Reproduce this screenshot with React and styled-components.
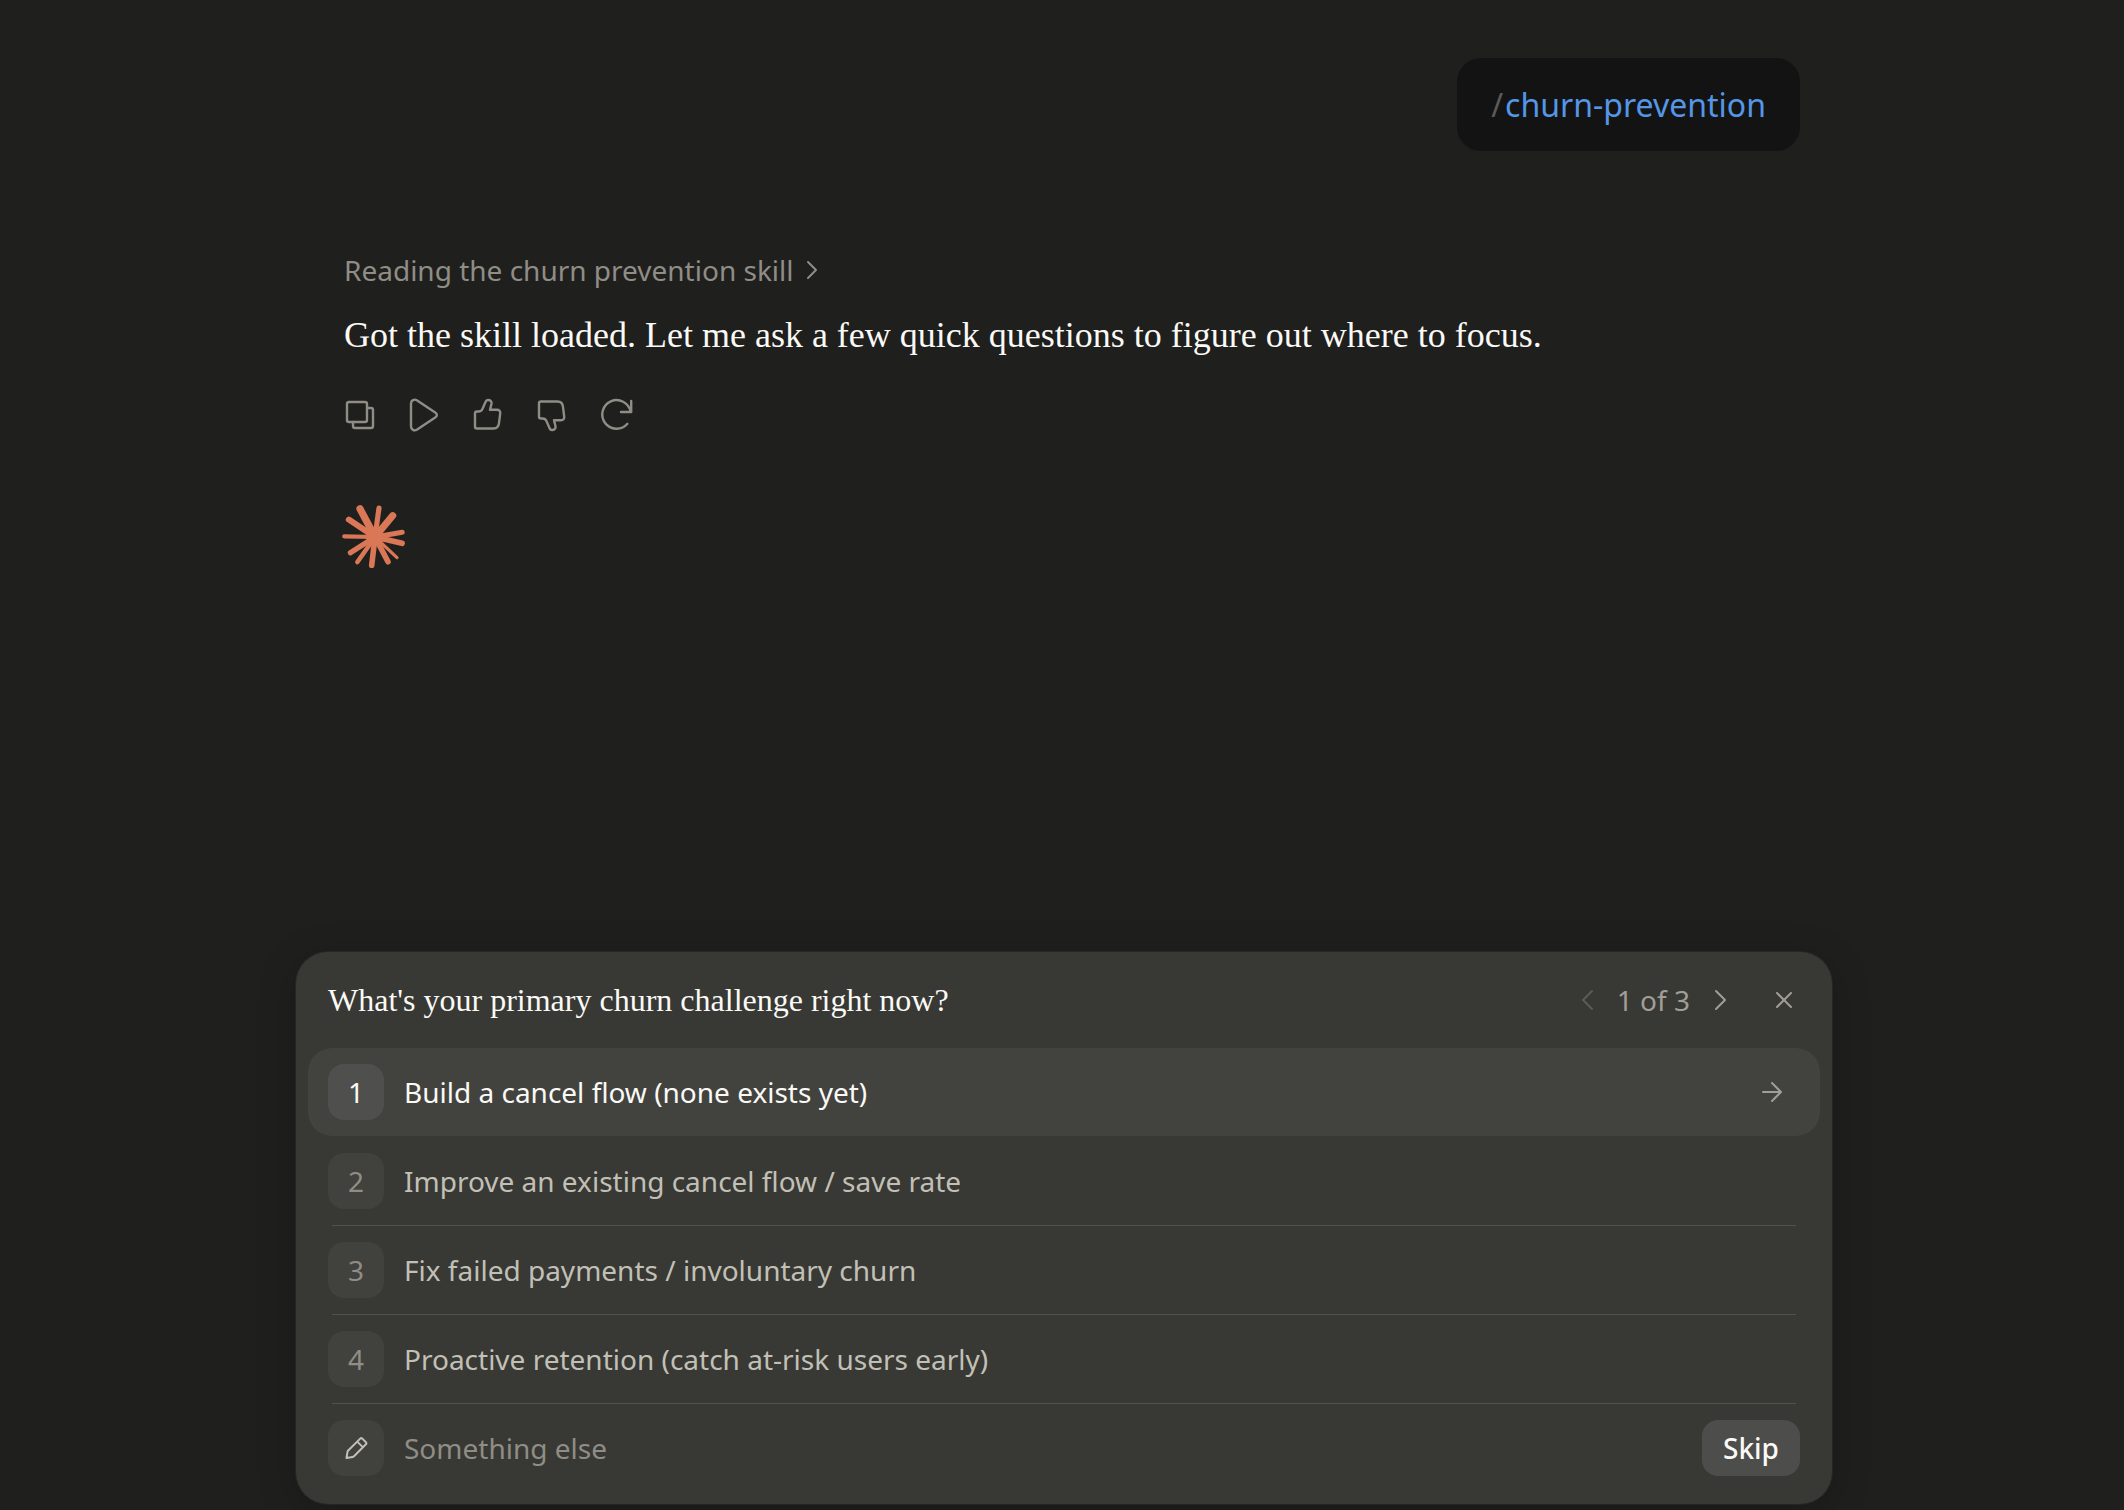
import React, { useState } from 'react';
import styled, { createGlobalStyle } from 'styled-components';

const GlobalStyle = createGlobalStyle`
  :root {
    --background: #1f1f1e;
    --bubble: #131313;
    --panel: #383834;
    --panel-hover: #42423e;
    --key: #41413d;
    --key-active: #4f4f4d;
    --line: #52524d;
    --foreground: #faf9f5;
    --secondary: #c2c0b6;
    --muted: #8f8d85;
    --accent: #5596e6;
    --brand: #d97757;
    --sans: "Noto Sans", "Open Sans", sans-serif;
    --serif: "Liberation Serif", "Times New Roman", serif;
  }

  * {
    box-sizing: border-box;
  }

  body {
    margin: 0;
    background: var(--background);
    color: var(--foreground);
    font-family: var(--sans);
    font-size: 28px;
    line-height: 40px;
  }

  button,
  input {
    font: inherit;
    color: inherit;
    border: none;
    background: transparent;
    padding: 0;
    margin: 0;
  }

  button {
    cursor: pointer;
  }

  svg {
    display: block;
    flex-shrink: 0;
  }
`;

const Page = styled.div`
  min-height: 100vh;
  display: flex;
  flex-direction: column;
  align-items: center;
  padding: 58px 20px 6px 24px;
`;

const Conversation = styled.main`
  width: 100%;
  max-width: 1536px;
  flex: 1;
  display: flex;
  flex-direction: column;
  padding: 0 32px 64px;
`;

const UserMessage = styled.div`
  align-self: flex-end;
  padding: 24px 34px;
  border-radius: 24px;
  background: var(--bubble);
  color: var(--accent);
  font-size: 32px;
  line-height: 45px;
`;

const Slash = styled.span`
  margin-right: 2px;
  color: #5a5a58;
`;

const Reply = styled.section`
  display: flex;
  flex-direction: column;
  align-items: flex-start;
  margin-top: 99px;
`;

const StepToggle = styled.button`
  display: flex;
  align-items: center;
  gap: 8px;
  margin-left: 16px;
  color: var(--muted);
`;

const ReplyText = styled.p`
  margin: 20px 16px 0;
  font-family: var(--serif);
  font-size: 36px;
  line-height: 50px;
`;

const Actions = styled.div`
  display: flex;
  margin-top: 24px;
`;

const ActionButton = styled.button`
  width: 64px;
  height: 64px;
  display: grid;
  place-items: center;
  color: var(--muted);
`;

const Mark = styled.div`
  margin: 56px 0 0 14px;
  color: var(--brand);
`;

const Panel = styled.section`
  width: 100%;
  max-width: 1536px;
  padding: 0 12px 12px;
  border-radius: 32px;
  background: var(--panel);
  box-shadow: 0 8px 40px rgba(0, 0, 0, 0.2), 0 0 0 1px #2a2a28;
`;

const PanelHeader = styled.header`
  display: flex;
  align-items: center;
  justify-content: space-between;
  height: 96px;
  padding: 0 16px 0 20px;
`;

const Question = styled.h2`
  margin: 0;
  font-family: var(--serif);
  font-size: 32px;
  font-weight: 400;
  line-height: 40px;
`;

const Pager = styled.nav`
  display: flex;
  align-items: center;
  gap: 10px;
  color: #a09e96;
`;

const IconButton = styled.button`
  width: 40px;
  height: 40px;
  display: grid;
  place-items: center;
  margin-left: ${props => (props.$apart ? '14px' : '0')};

  &:disabled {
    opacity: 0.35;
    cursor: default;
  }
`;

const Options = styled.ol`
  list-style: none;
  margin: 0;
  padding: 0;
`;

const OptionItem = styled.li`
  &::after {
    content: '';
    display: block;
    height: 1px;
    margin: 0 24px;
    background: ${props => (props.$active ? 'transparent' : 'var(--line)')};
  }
`;

const Option = styled.button`
  width: 100%;
  height: 88px;
  display: flex;
  align-items: center;
  gap: 20px;
  padding: 0 36px 0 20px;
  border-radius: 24px;
  text-align: left;
  color: ${props => (props.$active ? 'var(--foreground)' : 'var(--secondary)')};
  background: ${props => (props.$active ? 'var(--panel-hover)' : 'transparent')};
`;

const Key = styled.span`
  width: 56px;
  height: 56px;
  flex-shrink: 0;
  display: grid;
  place-items: center;
  border-radius: 16px;
  color: ${props => props.$color || 'var(--muted)'};
  background: ${props => (props.$active ? 'var(--key-active)' : 'var(--key)')};
`;

const OptionLabel = styled.span`
  flex: 1;
`;

const ArrowSlot = styled.span`
  color: #a09e96;
`;

const OtherRow = styled.div`
  display: flex;
  align-items: center;
  gap: 20px;
  height: 88px;
  padding: 0 20px;
`;

const OtherInput = styled.input`
  flex: 1;
  min-width: 0;
  height: 40px;
  outline: none;

  &::placeholder {
    color: var(--muted);
    opacity: 1;
  }
`;

const SkipButton = styled.button`
  height: 56px;
  min-width: 98px;
  padding: 0 20px;
  border-radius: 16px;
  font-weight: 500;
  background: #4d4d4b;
`;

function Icon({ size = 40, stroke = 2, children }) {
  return (
    <svg
      width={size}
      height={size}
      viewBox={`0 0 ${size} ${size}`}
      fill="none"
      stroke="currentColor"
      strokeWidth={stroke}
      strokeLinecap="round"
      strokeLinejoin="round"
      aria-hidden="true"
    >
      {children}
    </svg>
  );
}

const thumb =
  'M9 15.5h1.5c2 0 3.3-.9 4-2.6l3.1-7.1c.5-1.3 1.6-2 2.9-1.8 2.2.3 3.4 1.8 3 3.8l-1.5 6h7c2.2 0 3.5 1.5 3.2 3.6L31 27.2c-.4 3.2-2.4 5.3-5.4 5.3H9c-1.2 0-2-.8-2-2v-13c0-1.2.8-2 2-2z';

const actions = [
  {
    label: 'Copy',
    icon: (
      <>
        <rect x="7" y="6" width="20" height="20" rx="2" />
        <path d="M27 12h4a2 2 0 0 1 2 2v16a2 2 0 0 1-2 2H15a2 2 0 0 1-2-2v-4" />
      </>
    ),
  },
  {
    label: 'Read aloud',
    icon: <path d="M7 7.5v23c0 3 3.2 4.8 5.8 3.3l18.4-12.2c2.2-1.4 2.2-3.8 0-5.2L12.8 4.2C10.2 2.7 7 4.5 7 7.5z" />,
  },
  { label: 'Good response', icon: <path d={thumb} /> },
  { label: 'Bad response', icon: <path d={thumb} transform="matrix(1 0 0 -1 0 38)" /> },
  {
    label: 'Retry',
    icon: <path d="M31.4 27.8A14.3 14.3 0 1 1 34.6 15.6M35.2 5v11H25" />,
  },
];

// [x, y, width] of the tip of each ray
const rays = [
  [18, 4.8, 7.2],
  [37, 4, 5.2],
  [50.8, 11.6, 7],
  [60.2, 28.2, 5],
  [60, 39.3, 5.8],
  [55, 53.6, 3.2],
  [46, 57.8, 5.6],
  [29.7, 61.4, 5.6],
  [15.4, 58, 4.6],
  [8.4, 48.8, 5.2],
  [2.2, 32.4, 4.2],
  [6.8, 15.6, 6],
];

function Burst() {
  return (
    <svg width="64" height="64" viewBox="0 0 64 64" stroke="currentColor" strokeLinecap="round" aria-hidden="true">
      {rays.map(([x, y, w]) => (
        <line key={`${x}-${y}`} x1="33" y1="33" x2={x} y2={y} strokeWidth={w} />
      ))}
      <circle cx="33" cy="33" r="9" fill="currentColor" stroke="none" />
    </svg>
  );
}

const options = [
  'Build a cancel flow (none exists yet)',
  'Improve an existing cancel flow / save rate',
  'Fix failed payments / involuntary churn',
  'Proactive retention (catch at-risk users early)',
];

export default function App() {
  const [selected, setSelected] = useState(0);

  return (
    <>
      <GlobalStyle />
      <Page>
        <Conversation>
          <UserMessage>
            <Slash>/</Slash>churn-prevention
          </UserMessage>

          <Reply>
            <StepToggle type="button">
              Reading the churn prevention skill
              <Icon size={20}>
                <path d="M6 2l8 8-8 8" />
              </Icon>
            </StepToggle>
            <ReplyText>
              Got the skill loaded. Let me ask a few quick questions to figure out where to focus.
            </ReplyText>
            <Actions>
              {actions.map(({ label, icon }) => (
                <ActionButton key={label} type="button" aria-label={label}>
                  <Icon stroke={2.4}>{icon}</Icon>
                </ActionButton>
              ))}
            </Actions>
            <Mark>
              <Burst />
            </Mark>
          </Reply>
        </Conversation>

        <Panel>
          <PanelHeader>
            <Question>What's your primary churn challenge right now?</Question>
            <Pager aria-label="Questions">
              <IconButton type="button" aria-label="Previous" disabled>
                <Icon size={24}>
                  <path d="M17 3l-9 9 9 9" />
                </Icon>
              </IconButton>
              <span>1 of 3</span>
              <IconButton type="button" aria-label="Next">
                <Icon size={24}>
                  <path d="M8 3l9 9-9 9" />
                </Icon>
              </IconButton>
              <IconButton type="button" aria-label="Close" $apart>
                <Icon size={24}>
                  <path d="M5 5l14 14M19 5L5 19" />
                </Icon>
              </IconButton>
            </Pager>
          </PanelHeader>

          <Options>
            {options.map((label, i) => {
              const active = i === selected;
              return (
                <OptionItem key={label} $active={active}>
                  <Option type="button" $active={active} onClick={() => setSelected(i)}>
                    <Key $active={active} $color={active ? 'var(--foreground)' : undefined}>
                      {i + 1}
                    </Key>
                    <OptionLabel>{label}</OptionLabel>
                    {active && (
                      <ArrowSlot>
                        <Icon size={24}>
                          <path d="M3 12h18M12 3l9 9-9 9" />
                        </Icon>
                      </ArrowSlot>
                    )}
                  </Option>
                </OptionItem>
              );
            })}
          </Options>

          <OtherRow>
            <Key as="label" htmlFor="other" $color="var(--secondary)">
              <Icon size={24}>
                <path d="M2.5 22l1-6.2c.1-.5.3-.9.7-1.3L16.2 2.6a1.5 1.5 0 0 1 2.1 0l3.6 3.6a1.5 1.5 0 0 1 0 2.1L10 20.2c-.4.4-.8.6-1.3.7zM13.2 5.6l5.8 5.8" />
              </Icon>
            </Key>
            <OtherInput id="other" type="text" aria-label="Something else" placeholder="Something else" />
            <SkipButton type="button">Skip</SkipButton>
          </OtherRow>
        </Panel>
      </Page>
    </>
  );
}
